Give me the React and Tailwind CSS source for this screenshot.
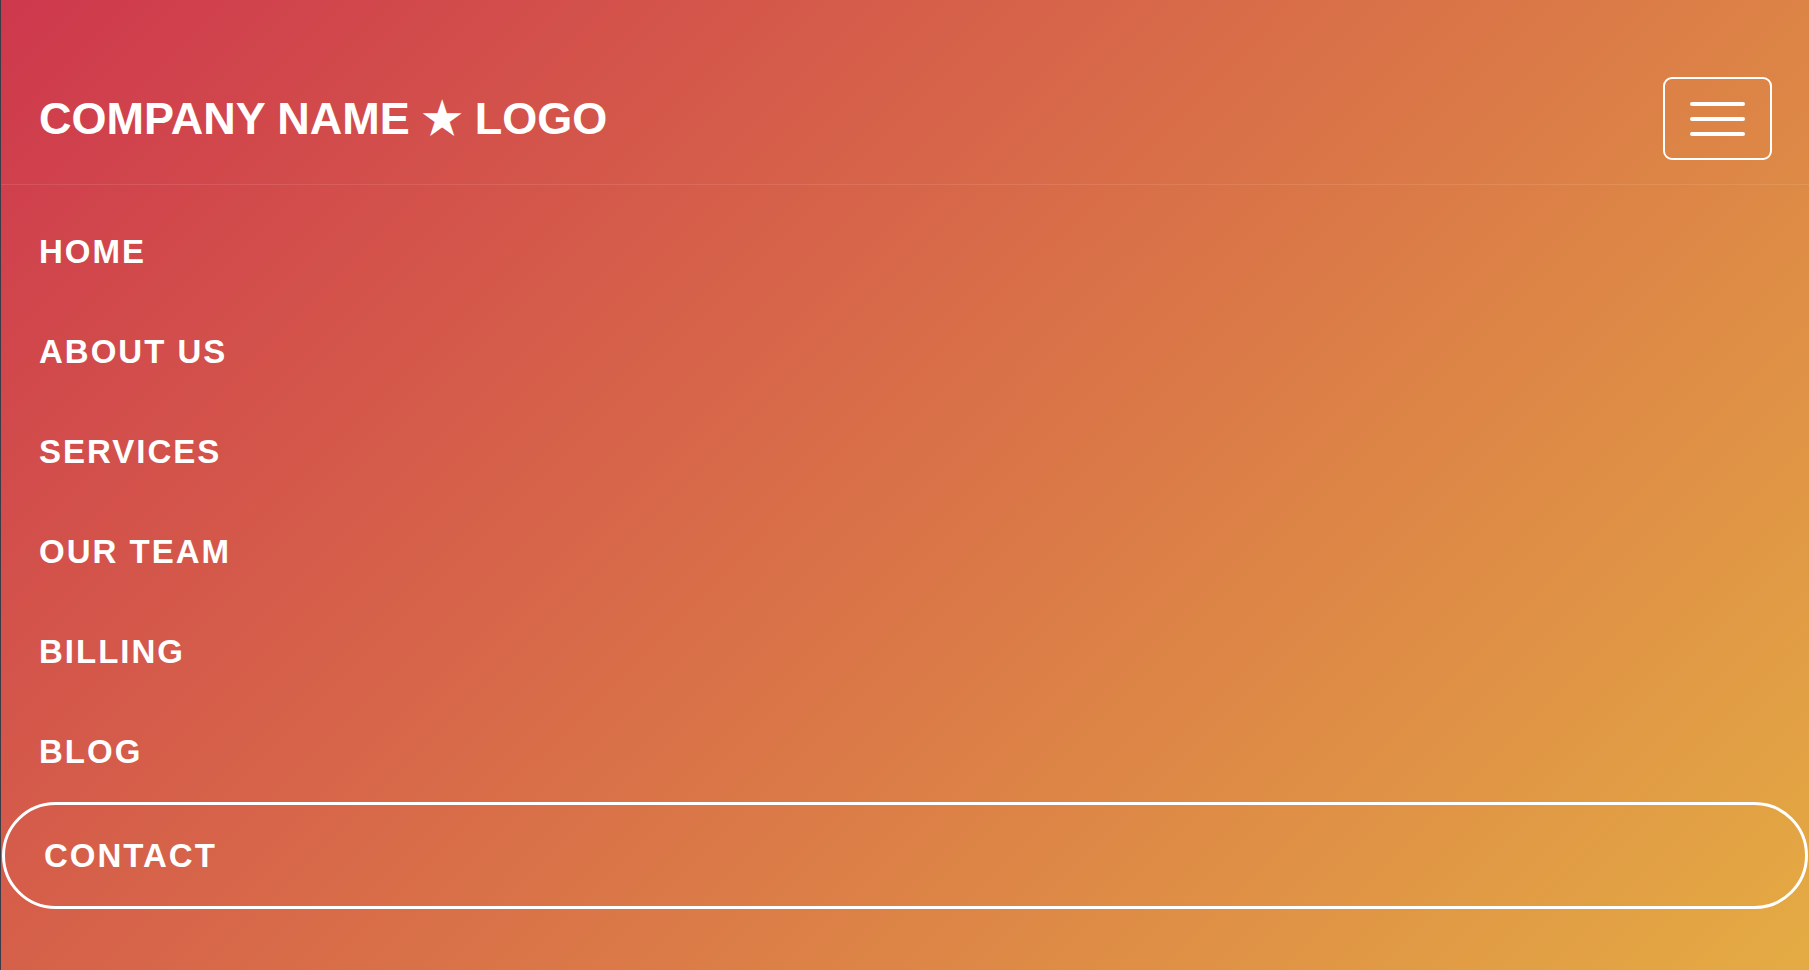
import React from 'react';

const links = ['HOME', 'ABOUT US', 'SERVICES', 'OUR TEAM', 'BILLING', 'BLOG'];

const MenuButton = () => (
  <button className="flex h-[83px] w-[109px] flex-col items-center justify-center gap-[11px] rounded-[9px] border-2 border-white">
    <span className="block h-[4px] w-[55px] rounded-full bg-white"></span>
    <span className="block h-[4px] w-[55px] rounded-full bg-white"></span>
    <span className="block h-[4px] w-[55px] rounded-full bg-white"></span>
  </button>
);

export default function App() {
  return (
    <div className="flex min-h-[970px] w-full bg-[#3b3a45] pl-px font-['Liberation_Sans',Arial,sans-serif] text-white">
      <div className="flex min-h-[970px] flex-1 flex-col bg-[linear-gradient(135deg,#ce384d,#e4ab43)]">
        {/* header */}
        <header className="flex h-[185px] items-center justify-between border-b border-white/10 pb-[24px] pl-[38px] pr-[37px] pt-[77px]">
          <span className="text-[45px] font-bold leading-none">COMPANY NAME ★ LOGO</span>
          <MenuButton />
        </header>

        <nav className="flex flex-col pt-[16px]">
          {links.map((label) => (
            <a
              key={label}
              href="#"
              className="flex h-[100px] items-center pl-[38px] text-[33px] font-bold leading-none tracking-[2px]"
            >
              {label}
            </a>
          ))}
          <a
            href="#"
            className="mx-px mt-[1px] flex h-[107px] items-center rounded-full border-[3px] border-white pl-[39px] text-[33px] font-bold leading-none tracking-[2px]"
          >
            CONTACT
          </a>
        </nav>
      </div>
    </div>
  );
}
